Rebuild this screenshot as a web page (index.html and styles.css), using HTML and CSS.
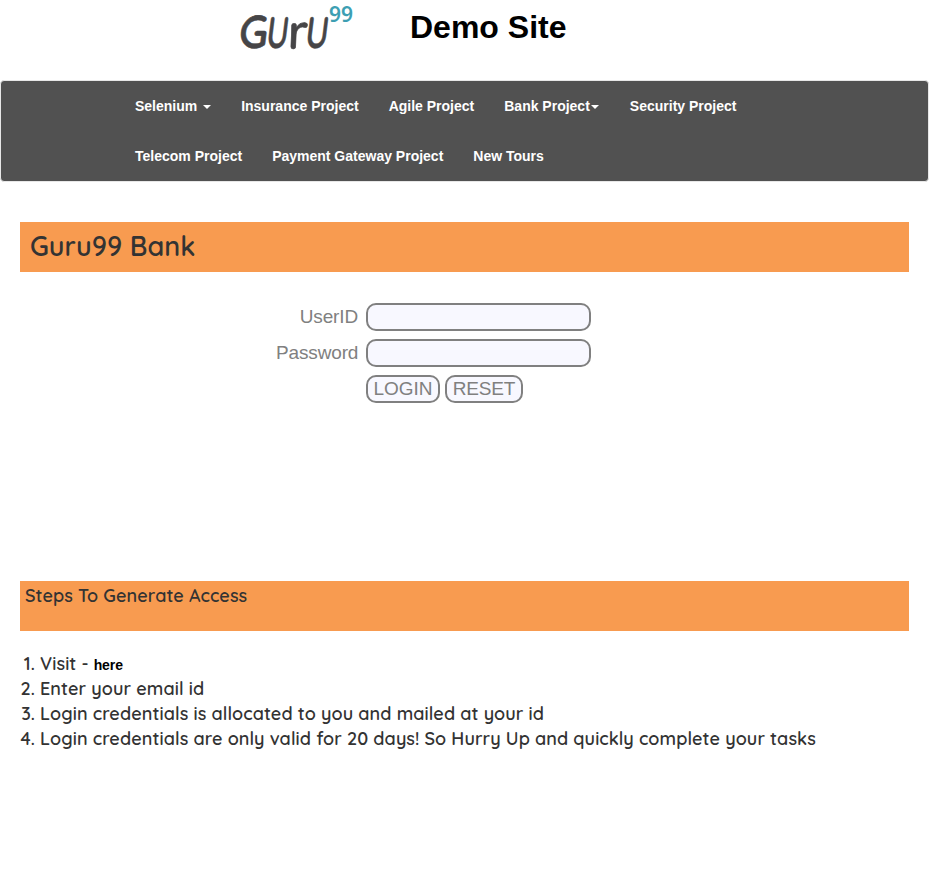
FILE: index.html
```html
<!DOCTYPE html>
<html lang="en">
<head>
<meta charset="utf-8">
<title>Guru99 Bank Home Page</title>
<link rel="stylesheet" href="styles.css">
</head>
<body>
<header class="site-header">
  <svg class="logo" width="120" height="60" viewBox="0 0 120 60" role="img" aria-label="Guru99">
    <g class="logo-name">
      <text transform="translate(0.5 48) skewX(-7)" font-size="46" textLength="29" lengthAdjust="spacingAndGlyphs">G</text>
      <text class="tall" transform="translate(28 48) skewX(-7)" font-size="44" textLength="22" lengthAdjust="spacingAndGlyphs">u</text>
      <text transform="translate(50.5 48.5) skewX(-2)" font-size="49" textLength="20" lengthAdjust="spacingAndGlyphs">r</text>
      <text class="tall" transform="translate(67 48) skewX(-7)" font-size="44" textLength="23" lengthAdjust="spacingAndGlyphs">u</text>
    </g>
    <text class="logo-number" x="92" y="22" textLength="24" lengthAdjust="spacingAndGlyphs">99</text>
  </svg>
  <h2 class="site-title">Demo Site</h2>
</header>
<nav class="navbar">
  <ul class="nav-list">
    <li><a>Selenium <b class="caret caret-spaced"></b></a></li>
    <li><a>Insurance Project</a></li>
    <li><a>Agile Project</a></li>
    <li class="bank-item"><a>Bank Project<b class="caret"></b></a></li>
    <li><a>Security Project</a></li>
    <li><a>Telecom Project</a></li>
    <li><a>Payment Gateway Project</a></li>
    <li><a>New Tours</a></li>
  </ul>
</nav>
<main class="content">
  <h1 class="bank-title">Guru99 Bank</h1>
  <form class="login">
    <label for="uid">UserID</label>
    <input id="uid" type="text">
    <label for="pwd">Password</label>
    <input id="pwd" type="password">
    <div class="actions">
      <button class="login-button" type="button">LOGIN</button>
      <button class="reset-button" type="reset">RESET</button>
    </div>
  </form>
  <h2 class="steps-title">Steps To Generate Access</h2>
  <ol class="steps">
    <li><span class="num">1.</span><span>Visit -</span><a class="here">here</a></li>
    <li><span class="num">2.</span><span>Enter your email id</span></li>
    <li><span class="num">3.</span><span>Login credentials is allocated to you and mailed at your id</span></li>
    <li><span class="num">4.</span><span>Login credentials are only valid for 20 days! So Hurry Up and quickly complete your tasks</span></li>
  </ol>
</main>
</body>
</html>
```
FILE: styles.css
```css
* { box-sizing: border-box; }
body {
  margin: 0;
  background: #fff;
  color: #333;
  font-family: "Liberation Sans", Arial, sans-serif;
  overflow: hidden;
}
.site-header {
  display: flex;
  height: 80px;
  padding-left: 237px;
}
.logo { flex: none; overflow: visible; }
.logo-name {
  font-family: Quicksand, Lato, sans-serif;
  font-weight: 600;
  fill: #464547;
  stroke: #464547;
  stroke-width: 0.6;
}
.tall { text-transform: uppercase; }
.logo-number {
  font: 600 21px "Noto Sans", sans-serif;
  fill: #3d9fb3;
}
.site-title {
  margin: 8px 0 0 53px;
  color: #000;
  font-size: 32px;
  line-height: 38px;
  white-space: nowrap;
}
.navbar {
  height: 102px;
  border: 1px solid #e7e7e7;
  border-radius: 4px;
  background: #515151;
}
.nav-list {
  display: flex;
  flex-wrap: wrap;
  width: 690px;
  margin: 0 0 0 119px;
  padding: 0;
  list-style: none;
}
.nav-list a {
  display: block;
  padding: 15px;
  color: #fff;
  font-size: 14px;
  font-weight: bold;
  line-height: 20px;
}
.bank-item { margin-right: 2px; }
.caret {
  display: inline-block;
  margin-left: 1px;
  vertical-align: middle;
  border-top: 4px solid #fff;
  border-left: 4px solid transparent;
  border-right: 4px solid transparent;
}
.bank-item .caret { margin-right: -1px; }
.caret-spaced { margin-left: 2px; }
.content { padding: 40px 20px 0; }
.bank-title {
  height: 50px;
  margin: 0;
  padding-left: 10px;
  background: #f89b50;
  font: 600 27px/49px Quicksand, Lato, sans-serif;
  letter-spacing: 0.05px;
}
.login {
  display: grid;
  grid-template-columns: 82px 225px;
  grid-auto-rows: 28px;
  gap: 8px;
  height: 278px;
  margin: 31px 0 0 256px;
  color: #808080;
  font-size: 19px;
  line-height: 27px;
}
.login label { text-align: right; letter-spacing: -0.15px; }
.login input, .login button {
  height: 28px;
  margin: 0;
  padding: 0;
  border: 2px solid #808080;
  border-radius: 10px;
  background: #f8f8ff;
  color: #808080;
  font: 19px/22px "Liberation Sans", Arial, sans-serif;
}
.actions { grid-column: 2; display: flex; gap: 5px; }
.login .login-button { width: 74px; }
.login .reset-button { width: 78px; letter-spacing: -0.2px; }
.steps-title {
  height: 50px;
  margin: 0;
  padding-left: 5px;
  background: #f89b50;
  font: 600 18px/29px Quicksand, Lato, sans-serif;
  letter-spacing: 0.07px;
}
.steps {
  margin: 20px 0 0;
  padding: 0;
  list-style: none;
  font: 600 18px/25px Quicksand, Lato, sans-serif;
  letter-spacing: 0.09px;
  white-space: nowrap;
}
.steps li { display: flex; height: 25px; }
.num { width: 15px; margin-right: 5px; display: flex; justify-content: flex-end; }
.here {
  margin-left: 5px;
  padding-top: 2px;
  color: #000;
  font: bold 14px/25px "Liberation Sans", Arial, sans-serif;
  letter-spacing: -0.1px;
}
```
